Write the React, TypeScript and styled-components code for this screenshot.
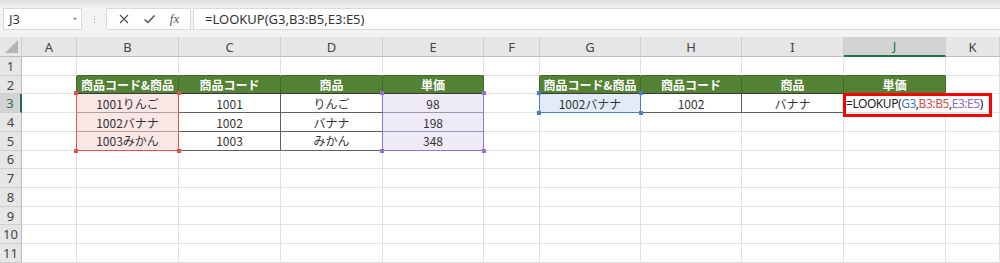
import styled, { createGlobalStyle } from 'styled-components';

const GlobalStyle = createGlobalStyle`
  body {
    margin: 0;
    font-family: 'Noto Sans', 'Noto Sans CJK JP', sans-serif;
    background: #fff;
  }
`;

const COLS = ['A', 'B', 'C', 'D', 'E', 'F', 'G', 'H', 'I', 'J', 'K'];
const ROW_COUNT = 11;

const Page = styled.div`
  width: 1000px;
  height: 263px;
  overflow: hidden;
  display: flex;
  flex-direction: column;
  background: #f3f3f3;
`;

const TopBar = styled.div`
  height: 37px;
  box-sizing: border-box;
  padding: 8px 0 7px 3px;
  display: flex;
  align-items: stretch;
  background: linear-gradient(#dedede 0px, #f3f3f3 8px);
`;

const NameBox = styled.div`
  width: 79px;
  box-sizing: border-box;
  background: #fff;
  border: 1px solid #dadada;
  display: flex;
  align-items: center;
  justify-content: space-between;
  padding: 0 4px 0 5px;
  font-size: 13px;
  color: #333;
`;

const Caret = styled.span`
  width: 0;
  height: 0;
  border-left: 2px solid transparent;
  border-right: 2px solid transparent;
  border-top: 2px solid #777;
`;

const Grip = styled.div`
  width: 24px;
  display: flex;
  flex-direction: column;
  align-items: center;
  justify-content: center;
  gap: 2px;
  & > span {
    width: 1px;
    height: 1px;
    background: #a8a8a8;
  }
`;

const ButtonBox = styled.div`
  width: 85px;
  box-sizing: border-box;
  background: #fff;
  border: 1px solid #dadada;
  display: flex;
  align-items: center;
  justify-content: space-around;
  padding: 0 4px;
  color: #555;
`;

const Fx = styled.span`
  font-family: 'Liberation Serif', serif;
  font-style: italic;
  font-size: 13px;
  color: #555;
`;

const FormulaInput = styled.div`
  flex: 1;
  margin-left: 2px;
  background: #fff;
  border-top: 1px solid #dadada;
  border-bottom: 1px solid #dadada;
  border-left: 1px solid #dadada;
  display: flex;
  align-items: center;
  padding-left: 11px;
  font-size: 13px;
  color: #333;
`;

const Sheet = styled.div`
  display: grid;
  grid-template-columns: 22px 55px 102px 102px 102px 101px 56px 101px 101px 102px 102px 54px;
  grid-template-rows: 20px repeat(11, 18.73px);
  background: #fff;
  position: relative;
`;

const Corner = styled.div`
  background: #e6e6e6;
  border-right: 1px solid #cfcfcf;
  border-bottom: 1px solid #bdbdbd;
  position: relative;
  &::after {
    content: '';
    position: absolute;
    right: 3px;
    bottom: 3px;
    border-left: 13px solid transparent;
    border-bottom: 13px solid #b4b4b4;
  }
`;

const ColHead = styled.div<{ $active?: boolean }>`
  background: ${(p) => (p.$active ? '#d3d3d3' : '#e6e6e6')};
  border-right: 1px solid #cfcfcf;
  border-bottom: ${(p) => (p.$active ? '2px solid #217346' : '1px solid #bdbdbd')};
  box-sizing: border-box;
  display: flex;
  align-items: center;
  justify-content: center;
  font-size: 13px;
  color: ${(p) => (p.$active ? '#217346' : '#444')};
`;

const RowHead = styled.div<{ $active?: boolean }>`
  background: ${(p) => (p.$active ? '#d3d3d3' : '#e6e6e6')};
  border-bottom: 1px solid #cfcfcf;
  border-right: ${(p) => (p.$active ? '2px solid #217346' : '1px solid #bdbdbd')};
  box-sizing: border-box;
  display: flex;
  align-items: center;
  justify-content: center;
  font-size: 13px;
  color: ${(p) => (p.$active ? '#217346' : '#444')};
`;

type CellSpec = {
  text?: string;
  bg?: string;
  rb?: string;
  bb?: string;
  bold?: boolean;
  left?: boolean;
  front?: boolean;
  formula?: boolean;
};

const Cell = styled.div<{
  $bg?: string;
  $rb?: string;
  $bb?: string;
  $bold?: boolean;
  $left?: boolean;
  $front?: boolean;
}>`
  box-sizing: border-box;
  background: ${(p) => p.$bg || '#fff'};
  border-right: 1px solid ${(p) => p.$rb || '#e1e1e1'};
  border-bottom: 1px solid ${(p) => p.$bb || '#e1e1e1'};
  display: flex;
  align-items: center;
  justify-content: ${(p) => (p.$left ? 'flex-start' : 'center')};
  padding-left: ${(p) => (p.$left ? '2px' : '0')};
  font-family: 'Noto Sans CJK JP', sans-serif;
  font-size: 12px;
  font-weight: ${(p) => (p.$bold ? 700 : 400)};
  color: ${(p) => (p.$bold ? '#fff' : '#333')};
  white-space: nowrap;
  position: relative;
  z-index: ${(p) => (p.$front ? 2 : 'auto')};
`;

const Handle = styled.span<{ $c: string; $x: 'l' | 'r'; $y: 't' | 'b' }>`
  position: absolute;
  width: 4px;
  height: 4px;
  background: ${(p) => p.$c};
  ${(p) => (p.$x === 'l' ? 'left: -3px;' : 'right: -3px;')}
  ${(p) => (p.$y === 't' ? 'top: -3px;' : 'bottom: -3px;')}
  z-index: 3;
`;

const RedBox = styled.div`
  position: absolute;
  left: 843px;
  top: 56px;
  width: 149px;
  height: 24px;
  box-sizing: border-box;
  border: 3px solid #ff0000;
  z-index: 4;
  pointer-events: none;
`;

const Ref = styled.span<{ $c: string }>`
  color: ${(p) => p.$c};
`;

const FormulaText = styled.span`
  font-family: 'Noto Sans', sans-serif;
  font-size: 12px;
  color: #222;
  letter-spacing: -0.45px;
`;

const GREEN = '#548235';
const GREEN_LINE = '#3f6a26';
const DARK = '#606060';
const PINK = '#fbe6e6';
const RED = '#d9534f';
const LAV = '#efebf8';
const PURPLE = '#9573d4';
const BLUE_BG = '#e2ebf7';
const BLUE = '#4a7fc8';

const head = (text: string): CellSpec => ({ text, bg: GREEN, rb: GREEN_LINE, bb: '#3a3a3a', bold: true });

// row number -> column letter -> cell
const cells: Record<number, Record<string, CellSpec>> = {
  1: {
    B: { bb: GREEN_LINE },
    C: { bb: GREEN_LINE },
    D: { bb: GREEN_LINE },
    E: { bb: GREEN_LINE },
    G: { bb: GREEN_LINE },
    H: { bb: GREEN_LINE },
    I: { bb: GREEN_LINE },
    J: { bb: GREEN_LINE },
  },
  2: {
    A: { rb: GREEN_LINE },
    B: head('商品コード&商品'),
    C: head('商品コード'),
    D: head('商品'),
    E: head('単価'),
    F: { rb: GREEN_LINE },
    G: head('商品コード&商品'),
    H: head('商品コード'),
    I: head('商品'),
    J: head('単価'),
  },
};

const leftData = [
  ['1001りんご', '1001', 'りんご', '98'],
  ['1002バナナ', '1002', 'バナナ', '198'],
  ['1003みかん', '1003', 'みかん', '348'],
];

leftData.forEach((r, i) => {
  const row = i + 3;
  const last = i === 2;
  cells[row] = {
    A: { rb: RED },
    B: { text: r[0], bg: PINK, rb: RED, bb: last ? RED : '#a9a0a0', front: true },
    C: { text: r[1], rb: DARK, bb: DARK },
    D: { text: r[2], rb: PURPLE, bb: DARK },
    E: { text: r[3], bg: LAV, rb: PURPLE, bb: last ? PURPLE : '#9f98ab', front: true },
  };
});

cells[3] = {
  ...cells[3],
  F: { rb: BLUE },
  G: { text: '1002バナナ', bg: BLUE_BG, rb: BLUE, bb: BLUE, front: true },
  H: { text: '1002', rb: DARK, bb: DARK },
  I: { text: 'バナナ', rb: DARK, bb: DARK },
  J: { rb: '#fff', left: true, front: true, formula: true },
};

const handles: Record<string, { c: string; x: 'l' | 'r'; y: 't' | 'b' }[]> = {
  B3: [
    { c: RED, x: 'l', y: 't' },
    { c: RED, x: 'r', y: 't' },
  ],
  B5: [
    { c: RED, x: 'l', y: 'b' },
    { c: RED, x: 'r', y: 'b' },
  ],
  E3: [
    { c: PURPLE, x: 'l', y: 't' },
    { c: PURPLE, x: 'r', y: 't' },
  ],
  E5: [
    { c: PURPLE, x: 'l', y: 'b' },
    { c: PURPLE, x: 'r', y: 'b' },
  ],
  G3: [
    { c: BLUE, x: 'l', y: 't' },
    { c: BLUE, x: 'r', y: 't' },
    { c: BLUE, x: 'l', y: 'b' },
    { c: BLUE, x: 'r', y: 'b' },
  ],
};

const Formula = () => (
  <FormulaText>
    =LOOKUP(<Ref $c="#4472c4">G3</Ref>,<Ref $c="#d0504c">B3:B5</Ref>,<Ref $c="#8d6cc9">E3:E5</Ref>)
  </FormulaText>
);

export default function App() {
  const rows = Array.from({ length: ROW_COUNT }, (_, i) => i + 1);
  return (
    <>
      <GlobalStyle />
      <Page>
        <TopBar>
          <NameBox>
            J3
            <Caret />
          </NameBox>
          <Grip>
            <span />
            <span />
            <span />
          </Grip>
          <ButtonBox>
            <svg width="12" height="12" viewBox="0 0 12 12">
              <path d="M2 2 L10 10 M10 2 L2 10" stroke="#555" strokeWidth="1.2" fill="none" />
            </svg>
            <svg width="13" height="12" viewBox="0 0 13 12">
              <path d="M1.5 6.5 L5 9.5 L11.5 2.5" stroke="#555" strokeWidth="1.6" fill="none" />
            </svg>
            <Fx>fx</Fx>
          </ButtonBox>
          <FormulaInput>=LOOKUP(G3,B3:B5,E3:E5)</FormulaInput>
        </TopBar>
        <Sheet>
          <Corner />
          {COLS.map((c) => (
            <ColHead key={c} $active={c === 'J'}>
              {c}
            </ColHead>
          ))}
          {rows.map((r) => [
            <RowHead key={`h${r}`} $active={r === 3}>
              {r}
            </RowHead>,
            ...COLS.map((c) => {
              const s = (cells[r] && cells[r][c]) || {};
              const hs = handles[`${c}${r}`] || [];
              return (
                <Cell
                  key={`${c}${r}`}
                  $bg={s.bg}
                  $rb={s.rb}
                  $bb={s.bb}
                  $bold={s.bold}
                  $left={s.left}
                  $front={s.front}
                >
                  {s.formula ? <Formula /> : s.text}
                  {hs.map((h, i) => (
                    <Handle key={i} $c={h.c} $x={h.x} $y={h.y} />
                  ))}
                </Cell>
              );
            }),
          ])}
          <RedBox />
        </Sheet>
      </Page>
    </>
  );
}
